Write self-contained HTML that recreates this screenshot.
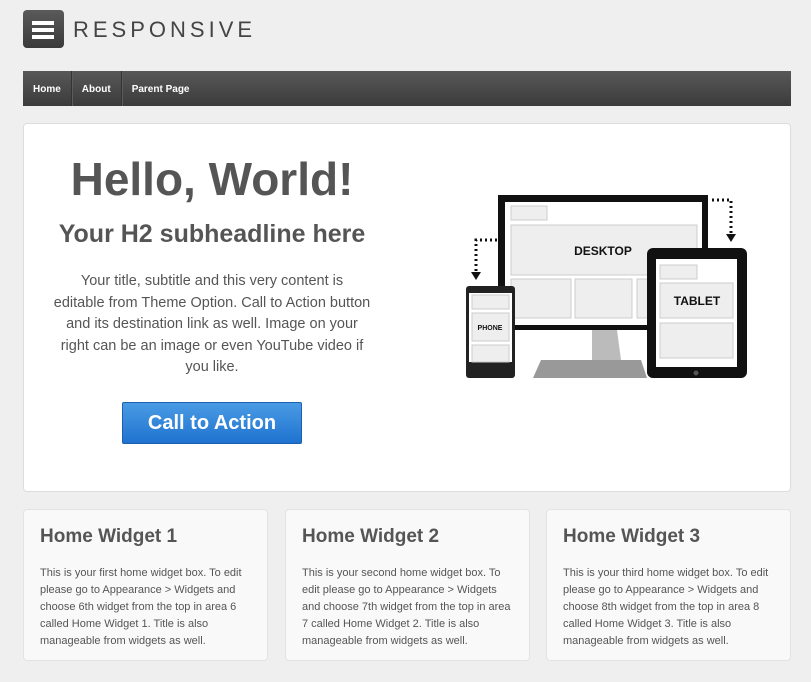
<!DOCTYPE html>
<html><head><meta charset="utf-8"><style>
*{margin:0;padding:0;box-sizing:border-box}
body{width:811px;height:682px;background:#efefef;font-family:"Liberation Sans",Arial,sans-serif;color:#555;position:relative;overflow:hidden}
.abs{position:absolute}
.logo{left:23px;top:10px;width:41px;height:38px;border-radius:4px;background:linear-gradient(#5a5a5a,#3a3a3a)}
.logo i{position:absolute;left:9px;width:22px;height:4px;background:#fff}
.brand{left:73px;top:17px;font-size:22px;letter-spacing:4px;color:#444}
.nav{left:23px;top:71px;width:768px;height:35px;background:linear-gradient(#585858,#3b3b3b)}
.nav span{float:left;height:35px;line-height:37px;font-size:10px;font-weight:bold;color:#fff;padding:0 10px;border-right:1px solid #333;box-shadow:1px 0 0 #5c5c5c}
.nav span:last-child{border:none;box-shadow:none}
.hero{left:23px;top:123px;width:768px;height:369px;background:#fff;border:1px solid #ddd;border-radius:4px}
.c{text-align:center;width:380px;left:22px}
h1{font-size:46px;font-weight:bold;color:#555}
h2{font-size:25px;font-weight:bold;color:#555}
.p{font-size:14.5px;line-height:21.5px;color:#555;white-space:nowrap}
.btn{left:122px;top:402px;width:180px;height:42px;background:linear-gradient(#4a9be4,#1f73cf);border:1px solid #1b5fae;border-radius:2px;color:#fff;font-size:20px;font-weight:bold;text-align:center;line-height:41px}
.w{top:509px;width:245px;height:152px;background:#f9f9f9;border:1px solid #e3e3e3;border-radius:4px;padding:15px 16px}
.w h3{font-size:19px;font-weight:bold;color:#555;line-height:24px;margin-bottom:16px}
.w p{font-size:11px;line-height:17px;color:#555}
</style></head><body>
<div class="abs logo"><i style="top:11px"></i><i style="top:18px"></i><i style="top:25px"></i></div>
<div class="abs brand">RESPONSIVE</div>
<div class="abs nav"><span>Home</span><span>About</span><span>Parent Page</span></div>
<div class="abs hero"></div>
<h1 class="abs c" style="top:152px">Hello, World!</h1>
<h2 class="abs c" style="top:220px">Your H2 subheadline here</h2>
<div class="abs c p" style="top:271px">Your title, subtitle and this very content is<br>editable from Theme Option. Call to Action button<br>and its destination link as well. Image on your<br>right can be an image or even YouTube video if<br>you like.</div>
<div class="abs btn">Call to Action</div>
<svg class="abs" style="left:0;top:0" width="811" height="682" viewBox="0 0 811 682">
<rect x="460" y="180" width="300" height="210" fill="#fff"/>
<g fill="none" stroke="#111" stroke-width="3" stroke-dasharray="2 3">
<path d="M497 240H476V272"/><path d="M712 200H731V234"/></g>
<path d="M471 272h10l-5 8z M726 234h10l-5 8z" fill="#111"/>
<rect x="498" y="195" width="210" height="135" fill="#111"/>
<rect x="505" y="202" width="197" height="123" fill="#fff"/>
<g fill="#eee" stroke="#ccc" stroke-width="1">
<rect x="511" y="206" width="36" height="14"/><rect x="511" y="225" width="186" height="50"/>
<rect x="511" y="279" width="60" height="39"/><rect x="575" y="279" width="57" height="39"/><rect x="637" y="279" width="60" height="39"/></g>
<text x="603" y="255" font-family="Liberation Sans" font-weight="bold" font-size="12" fill="#111" text-anchor="middle">DESKTOP</text>
<path d="M592 330h25l4 30h-29z" fill="#bbb"/>
<path d="M533 378l8-18h100l6 18z" fill="#999"/>
<rect x="647" y="248" width="100" height="130" rx="6" fill="#111"/>
<rect x="656" y="259" width="81" height="108" fill="#fff"/>
<g fill="#eee" stroke="#ccc"><rect x="660" y="265" width="37" height="14"/><rect x="660" y="283" width="73" height="35"/><rect x="660" y="323" width="73" height="35"/></g>
<text x="697" y="305" font-family="Liberation Sans" font-weight="bold" font-size="12" fill="#111" text-anchor="middle">TABLET</text>
<circle cx="696" cy="373" r="2.5" fill="#555"/>
<rect x="466" y="286" width="49" height="92" rx="3" fill="#222"/>
<rect x="469" y="293" width="43" height="69" fill="#fff"/>
<g fill="#eee" stroke="#ccc"><rect x="472" y="295" width="37" height="14"/><rect x="472" y="313" width="37" height="28"/><rect x="472" y="345" width="37" height="17"/></g>
<text x="490" y="330" font-family="Liberation Sans" font-weight="bold" font-size="7" fill="#111" text-anchor="middle">PHONE</text>
</svg>
<div class="abs w" style="left:23px"><h3>Home Widget 1</h3><p>This is your first home widget box. To edit please go to Appearance &gt; Widgets and choose 6th widget from the top in area 6 called Home Widget 1. Title is also manageable from widgets as well.</p></div>
<div class="abs w" style="left:285px"><h3>Home Widget 2</h3><p>This is your second home widget box. To edit please go to Appearance &gt; Widgets and choose 7th widget from the top in area 7 called Home Widget 2. Title is also manageable from widgets as well.</p></div>
<div class="abs w" style="left:546px"><h3>Home Widget 3</h3><p>This is your third home widget box. To edit please go to Appearance &gt; Widgets and choose 8th widget from the top in area 8 called Home Widget 3. Title is also manageable from widgets as well.</p></div>
</body></html>
